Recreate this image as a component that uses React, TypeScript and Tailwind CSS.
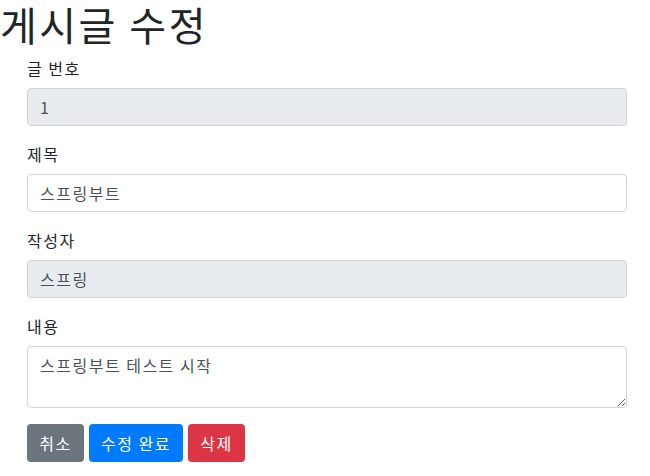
import React from "react";

const font = { fontFamily: '"Noto Sans CJK KR", "Noto Sans", sans-serif' };

function Field({
  label,
  value,
  readOnly,
}: {
  label: string;
  value: string;
  readOnly?: boolean;
}) {
  return (
    <div className="mb-4">
      <label className="block mb-2 text-base leading-6 text-[#212529]">{label}</label>
      <input
        className={`block w-full h-[38px] px-3 py-1.5 text-base leading-6 tracking-[1.5px] text-[#495057] border border-[#ced4da] rounded outline-none ${
          readOnly ? "bg-[#e9ecef]" : "bg-white"
        }`}
        style={font}
        defaultValue={value}
        readOnly={readOnly}
      />
    </div>
  );
}

export default function App() {
  return (
    <div className="text-[#212529] bg-white min-h-screen tracking-[1.5px]" style={font}>
      <h1 className="text-[40px] leading-[48px] font-normal tracking-[2.5px] mb-2">게시글 수정</h1>
      <div className="ml-[27px] w-[600px]">
        <Field label="글 번호" value="1" readOnly />
        <Field label="제목" value="스프링부트" />
        <Field label="작성자" value="스프링" readOnly />
        <div className="mb-4">
          <label className="block mb-2 text-base leading-6">내용</label>
          <textarea
            rows={2}
            className="block w-full px-3 py-1.5 text-base leading-6 tracking-[1.5px] text-[#495057] border border-[#ced4da] rounded bg-white outline-none"
            style={font}
            defaultValue="스프링부트 테스트 시작"
          />
        </div>
        <div className="flex gap-[5px]">
          <button className="h-[38px] w-[57px] text-base leading-6 tracking-[1.5px] text-white bg-[#6c757d] rounded">
            취소
          </button>
          <button className="h-[38px] w-[94px] text-base leading-6 tracking-[1.5px] text-white bg-[#007bff] rounded">
            수정 완료
          </button>
          <button className="h-[38px] w-[57px] text-base leading-6 tracking-[1.5px] text-white bg-[#dc3545] rounded">
            삭제
          </button>
        </div>
      </div>
    </div>
  );
}
